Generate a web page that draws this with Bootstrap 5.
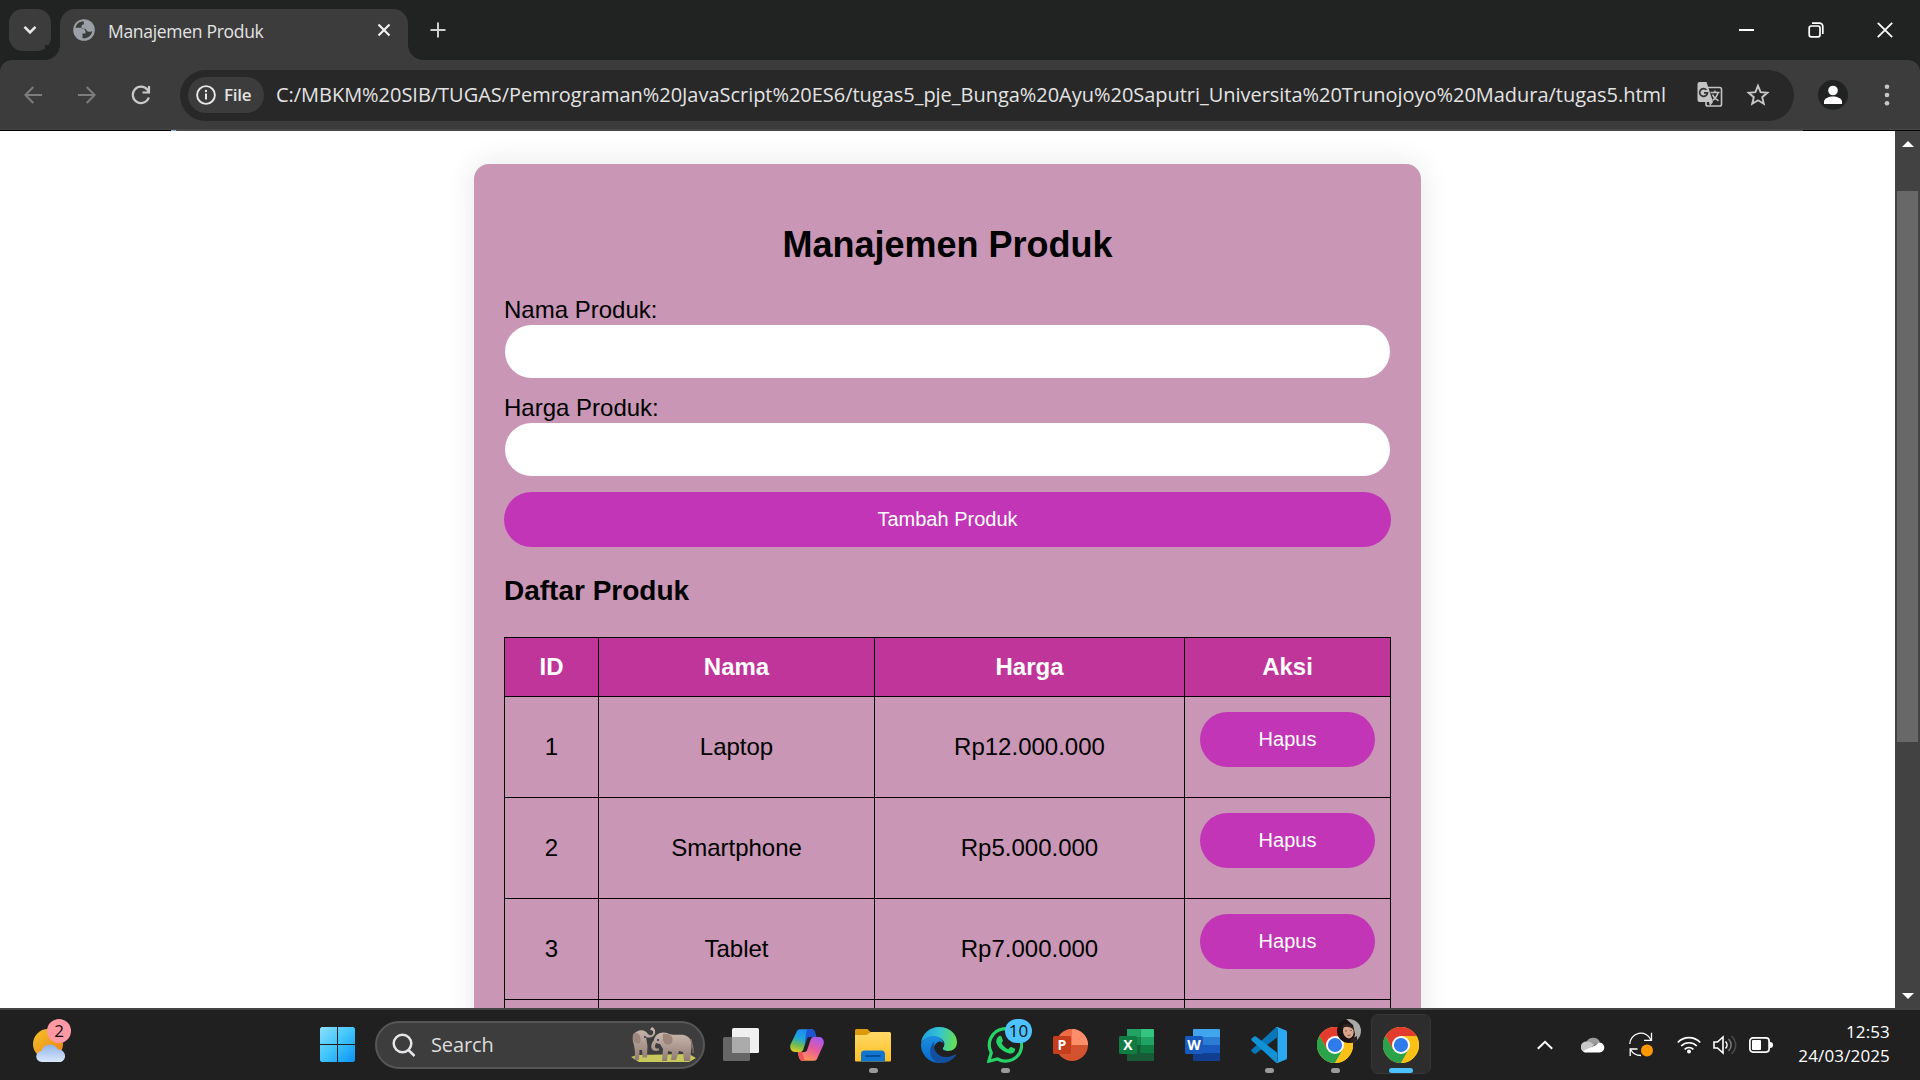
<!DOCTYPE html>
<html lang="id">
<head>
<meta charset="utf-8">
<title>Manajemen Produk</title>
<link href="https://cdn.jsdelivr.net/npm/bootstrap@5.3.0/dist/css/bootstrap.min.css" rel="stylesheet">
<style>
html,body{height:1080px;overflow:hidden}
body{width:1920px;background:#fff;font-family:"Open Sans","Noto Sans",sans-serif;line-height:1.2}
svg{display:block;flex:none}
.tabstrip{height:60px;background:#202322;padding-left:9px}
.tab-search{width:42px;height:42px;border-radius:14px;background:#3c3c3c;margin-top:9px}
.tab-active{width:348px;height:51px;margin:9px 0 0 9px;border-radius:15px 15px 0 0;background:#3c3c3c;padding:0 17px 9px 13px;color:#e3e3e3}
.tab-active::before,.tab-active::after{content:"";position:absolute;bottom:0;width:15px;height:15px}
.tab-active::before{left:-15px;background:radial-gradient(circle at 0 0,#202322 14.5px,#3c3c3c 15.2px)}
.tab-active::after{right:-15px;background:radial-gradient(circle at 100% 0,#202322 14.5px,#3c3c3c 15.2px)}
.tab-title{font-size:17.5px;letter-spacing:-.3px;margin-left:13px;padding-top:3px}
.win-btn{width:69px;height:60px}
.win-group{margin-right:1px}
.toolbar-wrap{background:#202322}
.toolbar-main{height:69px;background:#3c3c3c;border-radius:12px 12px 0 0;padding-left:6px}
.tool-cell{width:54px}
.omnibox{width:1614px;height:51px;border-radius:26px;background:#282828;padding:0 18px 0 8px;margin:1px 0 0 12px}
.file-chip{width:76px;height:36px;border-radius:18px;background:#3c3c3c;padding-left:8px;color:#e3e3e3;font-size:17px;font-weight:600;letter-spacing:-.3px}
.url-text{font-size:20px;color:#e3e3e3;margin-left:12px;width:1400px;letter-spacing:-.03px}
.load-line{height:2px;border-top:1px solid #484848;background:linear-gradient(90deg,#000 171px,#8ab4f8 171px 176px,#4a4a4a 176px 1803px,#000 1803px)}
.viewport-area{height:877px;overflow:hidden}
.page-area{width:1895px;padding-top:33px;overflow:hidden}
.scroll-col{width:25px;background:#424242}
.scroll-thumb{width:21px;height:551px;background:#686868;margin-top:44px}
.product-card{width:947px;height:1100px;background:#c996b6;border-radius:15px;box-shadow:0 0 30px rgba(0,0,0,.1);padding:60px 30px 0;font-family:"Liberation Sans",sans-serif;font-size:24px;color:#000;line-height:27px}
.product-card h1{font-size:36px;font-weight:700;line-height:41px;margin:0 0 31px}
.field-pill{display:block;height:53px;width:885px;border:0;border-radius:27px;background:#fff;margin:2px 1px 16px}
.btn-purple{width:100%;height:55px;border:0;border-radius:28px;background:#c235b7;color:#fff;font-size:20px;line-height:23px;padding:0}
.product-card h2{font-size:28px;font-weight:700;line-height:32px;margin:28px 0 30px}
.product-table{width:887px;table-layout:fixed;border-collapse:collapse;text-align:center}
.product-table th,.product-table td{border:1px solid #000;padding:14px 15px 16px;vertical-align:middle}
.product-table td:last-child{padding:15px}
.product-table th{background:#c03599;color:#fff;height:59px}
.product-table td{height:101px}
.product-table .btn-purple{margin-bottom:15px;display:block}
.task-bar{height:72px;background:#202020;border-top:2px solid #454545;padding-bottom:1px}
.weather-area{width:307px;padding-left:32px}
.count-pill{position:absolute;height:24px;border-radius:12px;color:#111;font-size:17px;line-height:24px;text-align:center}
.start-area{width:68px;padding-left:13px}
.search-pill{width:330px;height:48px;border-radius:24px;background:#3d3d3d;border:2px solid #565656;padding:0 6px 0 15px;color:#dcdcdc;font-size:20px;letter-spacing:-.1px}
.app-cell{width:66px;height:69px}
.app-cell .run-dot{position:absolute;bottom:6px;left:28.5px;width:9px;height:5px;border-radius:3px;background:#9a9a9a}
.app-cell .run-dot.run-wide{left:21px;width:24px;background:#4cc2ff}
.app-on::before{content:"";position:absolute;left:3px;top:4px;width:60px;height:60px;border-radius:7px;background:#2d2d2d;border:1px solid #363636}
.app-cell svg{position:relative}
.tray-clock{width:117px;color:#fff;font-size:17px;line-height:24px;letter-spacing:.15px;padding-bottom:1px}
</style>
<script src="https://cdn.jsdelivr.net/npm/bootstrap@5.3.0/dist/js/bootstrap.bundle.min.js"></script>
</head>
<body>
<svg width="0" height="0" class="position-absolute">
<defs>
<linearGradient id="gWin" x1="0" y1="0" x2="1" y2="1"><stop offset="0" stop-color="#8be0ff"/><stop offset=".5" stop-color="#3fc4fa"/><stop offset="1" stop-color="#0a93f5"/></linearGradient>
<linearGradient id="gSun" x1="0" y1="0" x2="1" y2="1"><stop offset="0" stop-color="#f3c32c"/><stop offset="1" stop-color="#ee7d12"/></linearGradient>
<linearGradient id="gCloud" x1="0" y1="0" x2="0" y2="1"><stop offset="0" stop-color="#8fb4ec"/><stop offset="1" stop-color="#dbe7fb"/></linearGradient>
<linearGradient id="gCopA" x1=".3" y1="0" x2="0" y2="1"><stop offset="0" stop-color="#1d8df2"/><stop offset=".35" stop-color="#20a7d8"/><stop offset=".65" stop-color="#6fbc54"/><stop offset="1" stop-color="#f3cf17"/></linearGradient>
<linearGradient id="gCopB" x1=".7" y1="0" x2=".2" y2="1"><stop offset="0" stop-color="#a95af0"/><stop offset=".45" stop-color="#e85a9d"/><stop offset="1" stop-color="#ff9d4d"/></linearGradient>
<linearGradient id="gFold" x1="0" y1="0" x2="0" y2="1"><stop offset="0" stop-color="#ffd968"/><stop offset="1" stop-color="#ffc022"/></linearGradient>
<linearGradient id="gEdgeA" x1="0" y1=".3" x2="1" y2=".4"><stop offset="0" stop-color="#1f9fe0"/><stop offset=".5" stop-color="#35c3d2"/><stop offset="1" stop-color="#66e04f"/></linearGradient>
<linearGradient id="gEdgeB" x1="0" y1="0" x2="0" y2="1"><stop offset="0" stop-color="#1a8ee0"/><stop offset="1" stop-color="#0a69c8"/></linearGradient>
<linearGradient id="gEle" x1="0" y1="0" x2="0" y2="1"><stop offset="0" stop-color="#cbb8ad"/><stop offset="1" stop-color="#8f7b73"/></linearGradient>
<symbol id="chromeLogo" viewBox="-18 -18 36 36">
<circle r="18" fill="#fbc116"/>
<path d="M-15.6-9A18 18 0 0 1 15.6-9L0-9-7.8 4.5Z" fill="#e33b2e"/>
<path d="M-15.6-9A18 18 0 0 0 0 18L7.8 4.5-7.8 4.5Z" fill="#2ba24c"/>
<path d="M0-9H15.6A18 18 0 0 1 0 18L7.8 4.5Z" fill="#fbc116"/>
<circle r="9" fill="#fff"/><circle r="7.1" fill="#2f7bec"/>
</symbol>
</defs>
</svg>

<!-- Tab strip -->
<div class="tabstrip d-flex">
  <div class="tab-search d-flex align-items-center justify-content-center"><svg width="14" height="10" viewBox="0 0 14 10" fill="none" stroke="#e8e8e8" stroke-width="2.6"><path d="M1.5 1.8 7 7.3l5.5-5.5"/></svg></div>
  <div class="tab-active position-relative d-flex align-items-center">
    <svg width="22" height="22" viewBox="0 0 22 22"><circle cx="11" cy="11" r="10.800" fill="#9aa0a6"/><path d="M10.500 2.200C5.500 2.500 3.200 5.500 2.500 8.800h5c2.800 0 5 1.700 5 4.200v1.500h-3v4.800c5.500.5 9.200-3 9.800-7.300-1 1-4.300 1.300-5.500-.3-.8-1.200-1-2.200-2.800-2.200H8.500V7.200c0-1.500 1.300-1.700 2.500-1.700 0-1.500-.3-2.500-.5-3.300Z" fill="#3c3c3c"/></svg>
    <span class="tab-title">Manajemen Produk</span>
    <svg class="ms-auto" width="14" height="14" viewBox="0 0 14 14" stroke="#f0f0f0" stroke-width="2.2"><path d="m1.500 1.500 11 11m0-11-11 11"/></svg>
  </div>
  <svg style="margin:22px 0 0 22px" width="16" height="16" viewBox="0 0 16 16" stroke="#cfcfcf" stroke-width="2"><path d="M8 .5v15M.5 8h15"/></svg>
  <div class="win-group ms-auto d-flex">
    <div class="win-btn d-flex align-items-center justify-content-center"><svg width="15" height="2"><path d="M0 1h15" stroke="#fff" stroke-width="2"/></svg></div>
    <div class="win-btn d-flex align-items-center justify-content-center"><svg width="16" height="16" viewBox="0 0 16 16" fill="none" stroke="#fff" stroke-width="1.700"><rect x="1.200" y="4" width="10.800" height="10.800" rx="2"/><path d="M4 1.200h7.500a3.300 3.300 0 0 1 3.300 3.300V12"/></svg></div>
    <div class="win-btn d-flex align-items-center justify-content-center"><svg width="16" height="16" viewBox="0 0 16 16" stroke="#fff" stroke-width="1.800"><path d="m.8.8 14.400 14.400m0-14.400L.8 15.200"/></svg></div>
  </div>
</div>

<!-- Toolbar -->
<div class="toolbar-wrap">
  <div class="toolbar-main d-flex align-items-center">
    <div class="tool-cell d-flex justify-content-center"><svg width="18" height="18" viewBox="0 0 18 18" fill="none" stroke="#7d7d7d" stroke-width="2"><path d="M18 9H1.500M9.300 1 1.300 9l8 8"/></svg></div>
    <div class="tool-cell d-flex justify-content-center"><svg width="18" height="18" viewBox="0 0 18 18" fill="none" stroke="#7d7d7d" stroke-width="2"><path d="M0 9h16.500M8.700 1l8 8-8 8"/></svg></div>
    <div class="tool-cell d-flex justify-content-center"><svg width="20" height="20" viewBox="0 0 20 20" fill="none" stroke="#c9c9c9" stroke-width="2.200"><path d="M17.800 12.500A8.200 8.200 0 1 1 16.500 4.800L18 7M18 1v6.500h-6.500"/></svg></div>
    <div class="omnibox d-flex align-items-center">
      <div class="file-chip d-flex align-items-center"><svg width="20" height="20" viewBox="0 0 20 20"><circle cx="10" cy="10" r="8.900" fill="none" stroke="#e8e8e8" stroke-width="1.900"/><path d="M10 8.500v6" stroke="#e8e8e8" stroke-width="2"/><circle cx="10" cy="6" r="1.200" fill="#e8e8e8"/></svg><span class="ms-2">File</span></div>
      <span class="url-text text-nowrap">C:/MBKM%20SIB/TUGAS/Pemrograman%20JavaScript%20ES6/tugas5_pje_Bunga%20Ayu%20Saputri_Universita%20Trunojoyo%20Madura/tugas5.html</span>
      <svg class="ms-auto" width="26" height="26" viewBox="0 0 26 26"><rect x="9" y="5.500" width="15.500" height="18.500" rx="1.800" fill="#282828" stroke="#c4c4c4" stroke-width="1.600"/><path d="M2.500 0H9.500L16 20H2.500A2 2 0 0 1 .5 18V2A2 2 0 0 1 2.500 0Z" fill="#c4c4c4"/><path d="m12 20 4 0-3 4Z" fill="#c4c4c4"/><path d="M9.500 7.800A3.900 3.900 0 1 0 10.500 10.800H7" fill="none" stroke="#333" stroke-width="1.700"/><path d="M13.500 10.500h9M18 8.500v2M21 10.500c-.8 3.500-3 6.200-5.500 7.800M15.500 12.500c1 2.500 3.500 5 6 6.200" fill="none" stroke="#c4c4c4" stroke-width="1.500"/></svg>
      <svg style="margin:0 6px 0 23px" width="24" height="24" viewBox="0 0 24 24"><path d="m12 2.800 2.600 6.300 6.800.6-5.200 4.500 1.600 6.600-5.800-3.500-5.800 3.500 1.600-6.600-5.200-4.500 6.800-.6Z" fill="none" stroke="#c7c7c7" stroke-width="1.900"/></svg>
    </div>
    <svg style="margin-left:24px" width="30" height="30" viewBox="0 0 30 30"><circle cx="15" cy="15" r="15" fill="#202322"/><circle cx="15" cy="10.500" r="4.800" fill="#fff"/><path d="M6 24v-2.500c0-3 5-5 9-5s9 2 9 5V24Z" fill="#fff"/></svg>
    <svg style="margin-left:36px" width="6" height="24" viewBox="0 0 6 24" fill="#c7c7c7"><circle cx="3" cy="3.700" r="2.300"/><circle cx="3" cy="12" r="2.300"/><circle cx="3" cy="20.300" r="2.300"/></svg>
  </div>
  <div class="load-line"></div>
</div>

<!-- Page -->
<div class="viewport-area d-flex">
  <div class="page-area">
    <main class="product-card mx-auto">
      <h1 class="text-center">Manajemen Produk</h1>
      <label class="d-block" for="nama">Nama Produk:</label>
      <input id="nama" class="field-pill" type="text">
      <label class="d-block" for="harga">Harga Produk:</label>
      <input id="harga" class="field-pill" type="text">
      <button class="btn-purple">Tambah Produk</button>
      <h2>Daftar Produk</h2>
      <table class="product-table">
        <colgroup><col style="width:94px"><col style="width:276px"><col style="width:310px"><col style="width:206px"></colgroup>
        <thead><tr><th>ID</th><th>Nama</th><th>Harga</th><th>Aksi</th></tr></thead>
        <tbody>
          <tr><td>1</td><td>Laptop</td><td>Rp12.000.000</td><td><button class="btn-purple">Hapus</button></td></tr>
          <tr><td>2</td><td>Smartphone</td><td>Rp5.000.000</td><td><button class="btn-purple">Hapus</button></td></tr>
          <tr><td>3</td><td>Tablet</td><td>Rp7.000.000</td><td><button class="btn-purple">Hapus</button></td></tr>
          <tr><td></td><td></td><td></td><td></td></tr>
        </tbody>
      </table>
    </main>
  </div>
  <div class="scroll-col d-flex flex-column align-items-center">
    <svg style="margin-top:10px" width="12" height="6"><path d="M0 6 6 0l6 6Z" fill="#fff"/></svg>
    <div class="scroll-thumb"></div>
    <svg class="mt-auto" style="margin-bottom:9px" width="12" height="6"><path d="M0 0l6 6 6-6Z" fill="#fff"/></svg>
  </div>
</div>

<!-- Taskbar -->
<footer class="task-bar d-flex align-items-center">
  <div class="weather-area position-relative">
    <svg width="38" height="38" viewBox="0 0 38 38"><circle cx="16" cy="18" r="15" fill="url(#gSun)"/><path d="M10 36a5.500 5.500 0 0 1-.5-11A9 9 0 0 1 26 23.500a6.500 6.500 0 0 1 3 12.500Z" fill="url(#gCloud)"/></svg>
    <span class="count-pill" style="left:47px;top:-7px;width:24px;background:#ff99a4">2</span>
  </div>
  <div class="start-area"><svg width="35" height="35" viewBox="0 0 35 35"><path d="M1.500 0H17v17H0V1.500ZM18 0h15.500L35 1.500V17H18ZM0 18h17v17H1.500L0 33.500ZM18 18h17v15.500L33.500 35H18Z" fill="url(#gWin)"/></svg></div>
  <div class="search-pill d-flex align-items-center">
    <svg width="24" height="24" viewBox="0 0 24 24" fill="none" stroke="#e6e6ea" stroke-width="2.500"><circle cx="10.500" cy="10.500" r="8.800"/><path d="m16.500 17 6 6"/></svg>
    <span style="margin-left:15px">Search</span>
    <svg class="ms-auto" width="68" height="38" viewBox="0 0 68 38">
      <path d="M2 31 8 29 60 28 67 32 60 36 10 36Z" fill="#c8c95c"/>
      <path d="M5 19C3 13 3 8 8 5.500c4-2.500 9-1 11 2.500 3 3 6 0 5-3l-3-1.500L23 1c5 2 4 10-2 10.500-2 .3-3 0-4-.5l1.500 9-.5 11.500h-4.500L13 24h-2.500L10 34H5.500L6 26Z" fill="url(#gEle)"/>
      <path d="M4 8c5-3 9 2 7 9C6 19 3 15 4 8Z" fill="#9c867b"/>
      <path d="M25 14c1-6 7-9 13-7 6 3 12 1 17 2 6 1.500 8 6 7.500 12L61 35h-6l-1-9-4-1-3 9h-5l1-8-4-1-1 10h-5l1-12-3-5c-2 0-3-1-4-1-2 4-1 6 3 5.500v2c-8 2-10-4-5-10.500Z" fill="url(#gEle)"/>
      <path d="M34 8c8-1 12 4 8 10-6 2-9-1-8-10Z" fill="#9c867b"/>
      <path d="M62 13c1 7 3 9 2 14" fill="none" stroke="#8d776f" stroke-width="1.200"/><circle cx="29" cy="14" r="1.100" fill="#392b5d"/><circle cx="16" cy="11" r="1" fill="#392b5d"/>
    </svg>
  </div>
  <div class="d-flex" style="margin-left:3px">
    <div class="app-cell position-relative d-flex align-items-center justify-content-center"><svg width="36" height="36" viewBox="0 0 36 36"><rect x="9" y="1" width="27" height="25" rx="1.500" fill="#f0f0f0"/><path d="M1.500 10H9V26H27v6.500a1.500 1.500 0 0 1-1.500 1.500h-24A1.500 1.500 0 0 1 0 32.500v-21A1.500 1.500 0 0 1 1.500 10Z" fill="#666"/><path d="M9 10h16.500a1.500 1.500 0 0 1 1.500 1.500V26H9Z" fill="#ababab"/></svg></div>
    <div class="app-cell position-relative d-flex align-items-center justify-content-center"><svg width="34" height="32" viewBox="0 0 34 32"><path d="M7 2C8 .5 9 .3 11 .3h10c3 0 3.500 1.500 4.500 5l.8 2.700H20c-2 0-3 1-3.500 3l-3 9c-.8 2.500-2 3-4.500 3H5C1 23-.5 19 .5 15.500Z" fill="url(#gCopA)"/><path d="M17 .3h5c2.500 0 3 2 4.300 7.700H20c-1.500 0-2.500.8-3 2L14.500 17 16 5Z" fill="#1e55d0"/><path d="M27 30c-1 1.500-2 1.700-4 1.700H13c-3 0-3.500-1.500-4.500-5L7.700 23H14c2 0 3-1 3.500-3l3-9c.8-2.500 2-3 4.500-3h4c4 0 5.500 4 4.500 7.500Z" fill="url(#gCopB)"/><path d="M8 23.200h4l3 8.500h-2c-3 0-3.500-1.500-5-8.500Z" fill="#f2505c"/><path d="M17.800 8.300h3c-1.800.6-2.300 2-2.800 3.700l-3 9.200c-.3 1-.8 1.700-1.700 2h-1.800c1.500-.6 2-1.700 2.500-3.200l2.600-8.300c.4-1.500.5-2.600 1.200-3.400Z" fill="#202020"/></svg></div>
    <div class="app-cell position-relative d-flex align-items-center justify-content-center"><svg width="36" height="34" viewBox="0 0 36 34"><path d="M1.500 1h11L16 4.500 12 9H0V2.500A1.500 1.500 0 0 1 1.500 1Z" fill="#dc9a0a"/><path d="M0 7h11.500L16 4h18.500A1.500 1.500 0 0 1 36 5.500v27a1 1 0 0 1-1 1H1a1 1 0 0 1-1-1Z" fill="url(#gFold)"/><path d="M6 33.500V26a3.500 3.500 0 0 1 3.500-3.500h17A3.500 3.500 0 0 1 30 26v7.500Z" fill="#0f77cf"/><path d="M10.500 28h15" stroke="#0b4d94" stroke-width="2"/></svg><i class="run-dot"></i></div>
    <div class="app-cell position-relative d-flex align-items-center justify-content-center"><svg width="36" height="36" viewBox="0 0 36 36"><path d="M0 16A18 18 0 0 1 18 0c11 0 18 7.500 18 15 0 6-4 9-9 9-4 0-6-1.500-5-3 3-4 1-9-4-10C10 9 3 11 0 16Z" fill="url(#gEdgeA)"/><path d="M0 17C3 10 10 8 16 9.500c4 1 6.500 4 6.500 7.500-1-3-8-3-9.500 3-1 7 5 14 12 14.500A18 18 0 0 1 0 17Z" fill="url(#gEdgeB)"/><path d="M13.500 14.500c-2 6 1 15 11.500 15.500 4 0 7-1.500 9.500-2.500.8-.3 1 .3.500 1C28 38 14 39 10 29c-2-5-.5-11 3.500-14.500Z" fill="#134f9f"/><path d="M21.500 21.500c-.6 1.500 1.500 2.500 5 2.500-4 1.500-10.500 0-11.500-4-.5-3 1.500-5.500 4-5.500 3 0 4.500 3.500 2.500 7Z" fill="#202020"/></svg></div>
    <div class="app-cell position-relative d-flex align-items-center justify-content-center"><svg width="36" height="36" viewBox="0 0 36 36"><path d="m1.800 34.200 2.500-8.500A16.200 16.200 0 1 1 10.500 32Z" fill="none" stroke="#25d366" stroke-width="3.200"/><path d="M11.500 9.500c1-1 2.500-.8 3 .3l1.400 3.400c.3 1-.9 2-1.400 2.800 1.500 3 4 5 6.800 6.200 1-.8 1.900-2.600 3-2.200l3.400 1.600c.8.500.4 2.600-.7 3.600-2.200 2-5.500 1.500-8.800-.2-4.200-2-7.300-5.300-8.700-9-.8-2.300.2-5 2-6.500Z" fill="#25d366"/></svg><span class="count-pill" style="left:33px;top:9px;width:27px;background:#4cc2ff">10</span><i class="run-dot"></i></div>
    <div class="app-cell position-relative d-flex align-items-center justify-content-center"><svg width="38" height="34" viewBox="0 0 38 34"><circle cx="20" cy="17" r="16" fill="#d35230"/><path d="M20 1a16 16 0 0 1 16 16H20Z" fill="#ff8f6b"/><path d="M20 1v16H4A16 16 0 0 1 20 1Z" fill="#ed6c47"/><rect x="1" y="8" width="18" height="18" rx="1.500" fill="#c43e1c"/><text x="10" y="21.500" font-family="Open Sans" font-size="14" font-weight="700" fill="#fff" text-anchor="middle">P</text></svg></div>
    <div class="app-cell position-relative d-flex align-items-center justify-content-center"><svg width="38" height="34" viewBox="0 0 38 34"><path d="M9 1h13.500v8H9Z" fill="#21a366"/><path d="M22.500 1H35a1 1 0 0 1 1 1v7H22.500Z" fill="#33c481"/><path d="M9 9h13.500v8H9Z" fill="#168747"/><path d="M22.500 9H36v8H22.500Z" fill="#21a366"/><path d="M9 17h27v15a1 1 0 0 1-1 1H10a1 1 0 0 1-1-1Z" fill="#185c37"/><path d="M22.500 17H36v8H22.500Z" fill="#107c41"/><rect x="1" y="8" width="18" height="18" rx="1.500" fill="#107c41"/><text x="10" y="21.500" font-family="Open Sans" font-size="14" font-weight="700" fill="#fff" text-anchor="middle">X</text></svg></div>
    <div class="app-cell position-relative d-flex align-items-center justify-content-center"><svg width="38" height="34" viewBox="0 0 38 34"><path d="M9 9V2a1 1 0 0 1 1-1h25a1 1 0 0 1 1 1v7Z" fill="#41a5ee"/><path d="M9 9h27v8H9Z" fill="#2b7cd3"/><path d="M9 17h27v8H9Z" fill="#185abd"/><path d="M9 25h27v7a1 1 0 0 1-1 1H10a1 1 0 0 1-1-1Z" fill="#103f91"/><rect x="1" y="8" width="18" height="18" rx="1.500" fill="#185abd"/><text x="10" y="21.500" font-family="Open Sans" font-size="14" font-weight="700" fill="#fff" text-anchor="middle">W</text></svg></div>
    <div class="app-cell position-relative d-flex align-items-center justify-content-center"><svg width="36" height="36" viewBox="0 0 36 36"><path d="m26 10.500-21 16q-1 .7-2 0l-2.300-2q-1-1 0-2L24.500.8q1.500-.8 1.500.5Z" fill="#0877b9"/><path d="m26 25.500-21-16q-1-.7-2 0L.700 11.500q-1 1 0 2L24.500 35.200q1.500.8 1.500-.5Z" fill="#1191d6"/><path d="M26.500 0 35 3.500q1 .6 1 1.500v26q0 1-1 1.500L26.500 36q-1.500 0-2-.8 2 .5 2-1.500V2.300q0-2-2-1.500.5-.8 2-.8Z" fill="#2aa8f2"/></svg><i class="run-dot"></i></div>
    <div class="app-cell position-relative d-flex align-items-center justify-content-center"><svg width="36" height="36"><use href="#chromeLogo"/></svg>
      <svg class="position-absolute" style="left:35px;top:9px" width="24" height="24" viewBox="0 0 24 24"><clipPath id="avatarClip"><circle cx="12" cy="12" r="12"/></clipPath><g clip-path="url(#avatarClip)"><path d="M0 0h24v24H0Z" fill="#191313"/><path d="M9 0h15v24h-8l2-9-2-9Z" fill="#a9a9a7"/><ellipse cx="11" cy="12.500" rx="5.300" ry="7" fill="#d8a68e" transform="rotate(-12 11 11)"/><path d="M4 10c2-8 10-7 13 1-5-4-9-4-13-1ZM14 20l6-3v7h-8Z" fill="#2e2020"/><path d="M8 12h2m3-.5h2M10.500 16.500l3-.5" stroke="#8a574a" stroke-width="1"/></g></svg><i class="run-dot"></i></div>
    <div class="app-cell app-on position-relative d-flex align-items-center justify-content-center"><svg width="36" height="36"><use href="#chromeLogo"/></svg><i class="run-dot run-wide"></i></div>
  </div>
  <div class="ms-auto d-flex align-items-center" style="padding-right:30px">
    <svg width="16" height="10" viewBox="0 0 16 10" fill="none" stroke="#fff" stroke-width="2"><path d="m.8 8.800 7.200-7 7.200 7"/></svg>
    <svg style="margin-left:28px" width="24" height="16" viewBox="0 0 24 16"><path d="M5 6a7.500 7.500 0 0 1 14-1l-7 4Z" fill="#9c9c9c"/><path d="M5 15.500A5.500 5.500 0 0 1 5.500 4.500c3-.5 5.500 1.500 7.500 3.500l-8 7Z" fill="#c8c8c8"/><path d="m2 14 13-6 2.500-2.500A5 5 0 0 1 19 15.500H5.500Q3 15.500 2 14Z" fill="#fff"/></svg>
    <svg style="margin-left:24px" width="24" height="25" viewBox="0 0 24 25" fill="none" stroke="#fff" stroke-width="1.300"><path d="M.8 12A11 11 0 0 1 22 8M22.500.8V8.300H15M1.200 24V17H8.500M1.500 17.500C4 22 8 23.500 12 23.500"/><circle cx="18" cy="18.500" r="6" fill="#ff9800" stroke="none"/></svg>
    <svg style="margin-left:24px" width="24" height="18" viewBox="0 0 24 18" fill="none" stroke="#fff" stroke-width="1.700"><path d="M.8 6.500a15.500 15.500 0 0 1 22.400 0M4.200 10a11 11 0 0 1 15.600 0M7.600 13.300a6.300 6.300 0 0 1 8.800 0"/><circle cx="12" cy="15.500" r="2" fill="#fff" stroke="none"/></svg>
    <svg style="margin-left:12px" width="24" height="20" viewBox="0 0 24 20" fill="none" stroke="#fff" stroke-width="1.600"><path d="M1 7v6h3.500L10 18V2L4.500 7Z"/><path d="M12.500 6.500c2 2 2 5 0 7"/><path d="M15.500 4c3.500 3.500 3.500 8.500 0 12" stroke="#777"/><path d="M18.500 1c5.500 5.500 5.500 12.500 0 18" stroke="#4a4a4a"/></svg>
    <svg style="margin-left:12px" width="24" height="16" viewBox="0 0 24 16"><rect x=".9" y=".9" width="19.200" height="14.200" rx="3" fill="none" stroke="#fff" stroke-width="1.700"/><rect x="3" y="3" width="9" height="10" rx="1" fill="#fff"/><path d="M21 5q3 0 3 3t-3 3Z" fill="#fff"/></svg>
    <div class="tray-clock text-end">12:53<br>24/03/2025</div>
  </div>
</footer>
</body>
</html>
